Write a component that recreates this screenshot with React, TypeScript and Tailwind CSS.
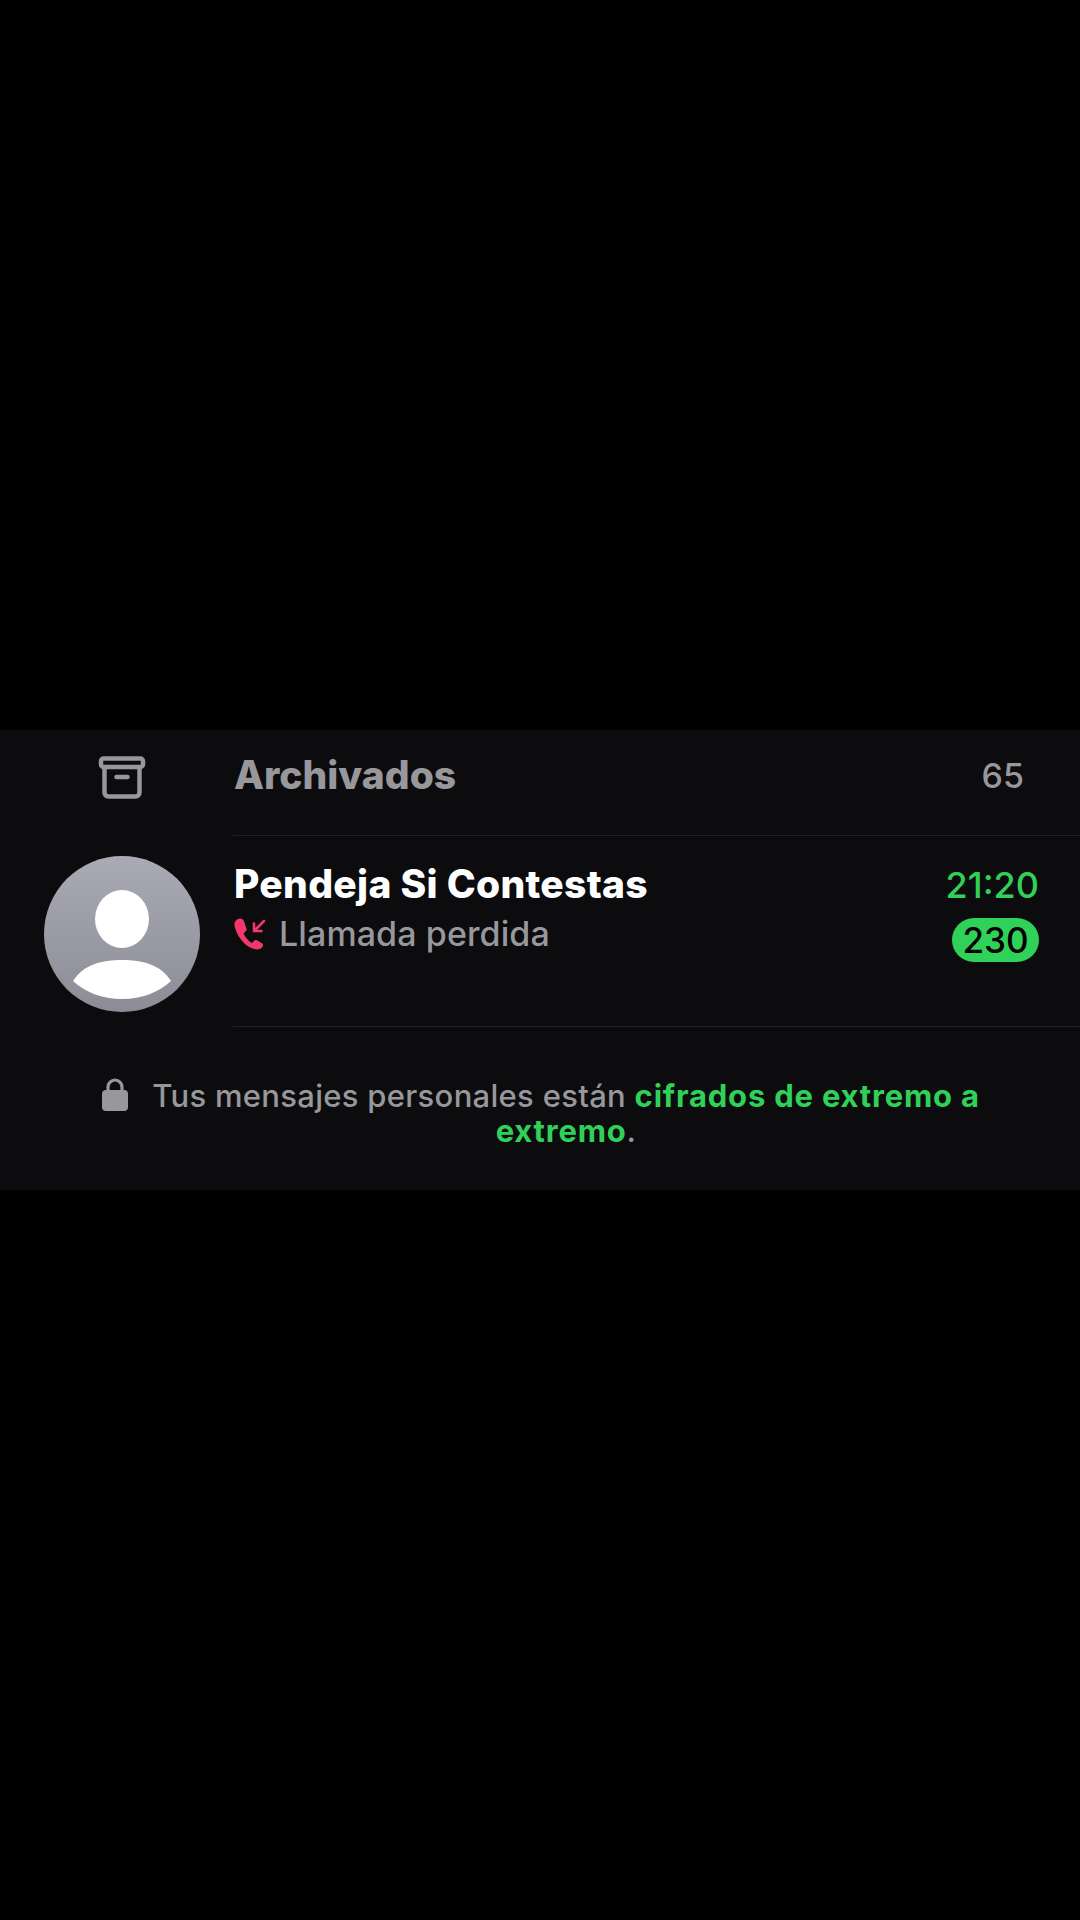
import React from 'react';

const font = { fontFamily: 'Inter, "Liberation Sans", sans-serif' };

const ArchiveIcon = () => (
  <svg width="48" height="43" viewBox="0 0 47 43" fill="none" stroke="#98979c" strokeWidth="4.5" strokeLinejoin="round" strokeLinecap="round">
    <rect x="2.500" y="2.500" width="42" height="8.500" rx="2.500" />
    <path d="M6 11v25.500a4 4 0 0 0 4 4h27a4 4 0 0 0 4-4V11" />
    <path d="M18 21h11" />
  </svg>
);

const DefaultAvatar = () => (
  <svg width="156" height="156" viewBox="0 0 156 156" className="shrink-0">
    <defs>
      <linearGradient id="avatarBg" x1="0" y1="0" x2="0" y2="1">
        <stop offset="0" stopColor="#a9aab4" />
        <stop offset="1" stopColor="#8b8c96" />
      </linearGradient>
    </defs>
    <circle cx="78" cy="78" r="78" fill="url(#avatarBg)" />
    <ellipse cx="78" cy="63" rx="27" ry="29" fill="#fff" />
    <path d="M29 125C40 108 58 104 78 104s38 4 49 21c-12 11-29 18-49 18s-37-7-49-18z" fill="#fff" />
  </svg>
);

const MissedCallIcon = () => (
  <svg width="32" height="32" viewBox="0 0 32 32" fill="none" className="shrink-0">
    <path d="M3 1.500c-2.400 1.600-3 4.400-2.200 7.600C2.400 15.600 6 21.400 11 26c3.600 3.200 8.400 5.600 12.600 5.400 2.600-.1 4.600-1.400 5.400-3.400.4-1.100.1-2-1-2.700l-5-3c-1-.6-2-.4-2.800.4l-1.600 1.700c-.5.5-1.100.5-1.700.1-3-2.200-5.400-5-7-8.200-.3-.6-.2-1.200.3-1.600l1.600-1.400c.9-.8 1-1.800.6-2.800L10 3.200C9.200 1.400 8 .6 6.400.6 5.200.6 4 .8 3 1.500z" fill="#f0386b" />
    <path d="M30 3 20 13M20 5.500V13h7.500" stroke="#f0386b" strokeWidth="2.600" strokeLinecap="round" strokeLinejoin="round" />
  </svg>
);

const LockIcon = () => (
  <svg width="26" height="33" viewBox="0 0 26 33" fill="none" className="shrink-0">
    <path d="M6 14V9a7 7 0 0 1 14 0v5" stroke="#98979c" strokeWidth="3.200" />
    <rect x="0" y="12" width="26" height="21" rx="4" fill="#98979c" />
  </svg>
);

export default function App() {
  return (
    <div className="min-h-[1920px] bg-black pt-[730px]" style={font}>
      <div className="bg-[#0c0b0e]">
        <div className="flex">
          <div className="w-[233px] shrink-0 pl-[44px] pt-[26px]">
            <div className="w-[156px] flex justify-center"><ArchiveIcon /></div>
          </div>
          <div className="flex-1 h-[106px] border-b border-[#222225] flex items-center justify-between pl-[1px] pr-[56px] pb-[16px]">
            <span className="text-[39px] font-extrabold text-[#98979c] leading-none">Archivados</span>
            <span className="text-[34px] font-medium text-[#98979c] leading-none mt-[3px]">65</span>
          </div>
        </div>

        <div className="flex">
          <div className="w-[233px] shrink-0 pl-[44px] pt-[20px]">
            <DefaultAvatar />
          </div>
          <div className="flex-1 h-[191px] border-b border-[#222225] flex justify-between pl-[1px] pr-[41px] pt-[26px]">
            <div>
              <div className="text-[39px] font-extrabold tracking-[0.3px] text-white leading-[44px]">Pendeja Si Contestas</div>
              <div className="flex items-center gap-[13px] mt-[8px]">
                <MissedCallIcon />
                <span className="text-[34px] font-medium tracking-[0.1px] text-[#98979c] leading-[40px]">Llamada perdida</span>
              </div>
            </div>
            <div className="flex flex-col items-end">
              <span className="text-[36px] font-medium text-[#30d158] leading-[44px] mt-[1px]">21:20</span>
              <span className="mt-[11px] h-[44px] w-[87px] rounded-full bg-[#30d158] text-black font-medium text-[35px] leading-[44px] text-center">230</span>
            </div>
          </div>
        </div>

        <div className="h-[163px] flex items-start pl-[102px] pt-[51px]">
          <LockIcon />
          <p className="ml-[20px] w-[836px] text-center text-[31px] font-medium tracking-[0.3px] leading-[35px] text-[#98979c]">
            Tus mensajes personales están <span className="font-bold tracking-[0.8px] text-[#30d158]">cifrados de extremo a extremo</span>.
          </p>
        </div>
      </div>
    </div>
  );
}
